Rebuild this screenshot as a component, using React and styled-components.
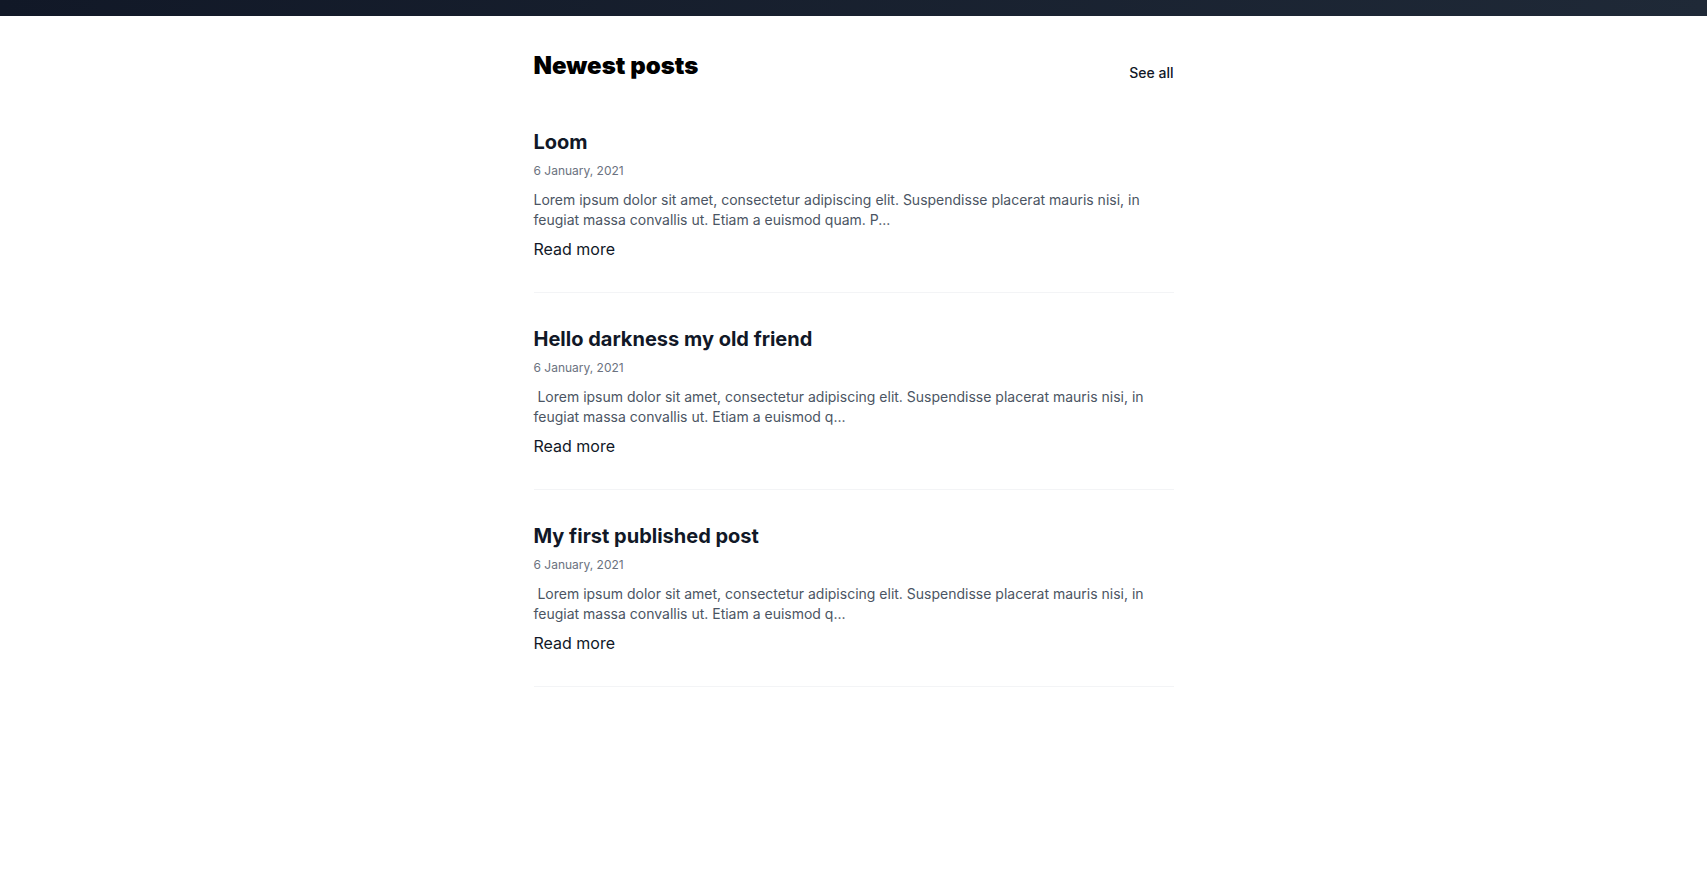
import React from "react";
import styled, { createGlobalStyle } from "styled-components";

const Global = createGlobalStyle`
  * { box-sizing: border-box; }
  html, body { margin: 0; padding: 0; background: #ffffff; }
  body {
    font-family: Inter, "Noto Sans", "Liberation Sans", sans-serif;
    -webkit-font-smoothing: antialiased;
  }
`;

const TopBar = styled.header`
  height: 16px;
  background: linear-gradient(to right, #111827, #1f2937);
`;

const Main = styled.main`
  max-width: 640px;
  margin: 0 auto;
  padding: 34px 0 40px;
`;

const Header = styled.div`
  display: flex;
  justify-content: space-between;
  align-items: flex-start;
`;

const Heading = styled.h2`
  margin: 0;
  font-size: 24px;
  line-height: 32px;
  font-weight: 900;
  color: #000000;
`;

const SeeAll = styled.a`
  margin-top: 11px;
  font-size: 14px;
  line-height: 24px;
  font-weight: 500;
  color: #111827;
  text-decoration: none;
`;

const List = styled.ul`
  list-style: none;
  margin: 11px 0 0;
  padding: 0;
`;

const Post = styled.li`
  padding: 32px 0 31px;
  border-bottom: 1px solid #f3f4f6;
`;

const Title = styled.h3`
  margin: 0;
  font-size: 20px;
  line-height: 28px;
  font-weight: 700;
  color: #111827;
`;

const DateText = styled.p`
  margin: 7px 0 0;
  font-size: 12px;
  line-height: 16px;
  color: #6b7280;
`;

const Excerpt = styled.p`
  margin: 11px 0 0;
  font-size: 14px;
  line-height: 20px;
  color: #4b5563;
`;

const ReadMore = styled.a`
  display: inline-block;
  margin-top: 7px;
  font-size: 16px;
  line-height: 24px;
  color: #111827;
  text-decoration: none;
`;

const posts = [
  {
    title: "Loom",
    date: "6 January, 2021",
    excerpt:
      "Lorem ipsum dolor sit amet, consectetur adipiscing elit. Suspendisse placerat mauris nisi, in feugiat massa convallis ut. Etiam a euismod quam. P...",
  },
  {
    title: "Hello darkness my old friend",
    date: "6 January, 2021",
    excerpt:
      "\u00A0Lorem ipsum dolor sit amet, consectetur adipiscing elit. Suspendisse placerat mauris nisi, in feugiat massa convallis ut. Etiam a euismod q...",
  },
  {
    title: "My first published post",
    date: "6 January, 2021",
    excerpt:
      "\u00A0Lorem ipsum dolor sit amet, consectetur adipiscing elit. Suspendisse placerat mauris nisi, in feugiat massa convallis ut. Etiam a euismod q...",
  },
];

export default function App() {
  return (
    <>
      <Global />
      <TopBar />
      <Main>
        <Header>
          <Heading>Newest posts</Heading>
          <SeeAll href="#">See all</SeeAll>
        </Header>
        <List>
          {posts.map((p) => (
            <Post key={p.title}>
              <Title>{p.title}</Title>
              <DateText>{p.date}</DateText>
              <Excerpt>{p.excerpt}</Excerpt>
              <ReadMore href="#">Read more</ReadMore>
            </Post>
          ))}
        </List>
      </Main>
    </>
  );
}
